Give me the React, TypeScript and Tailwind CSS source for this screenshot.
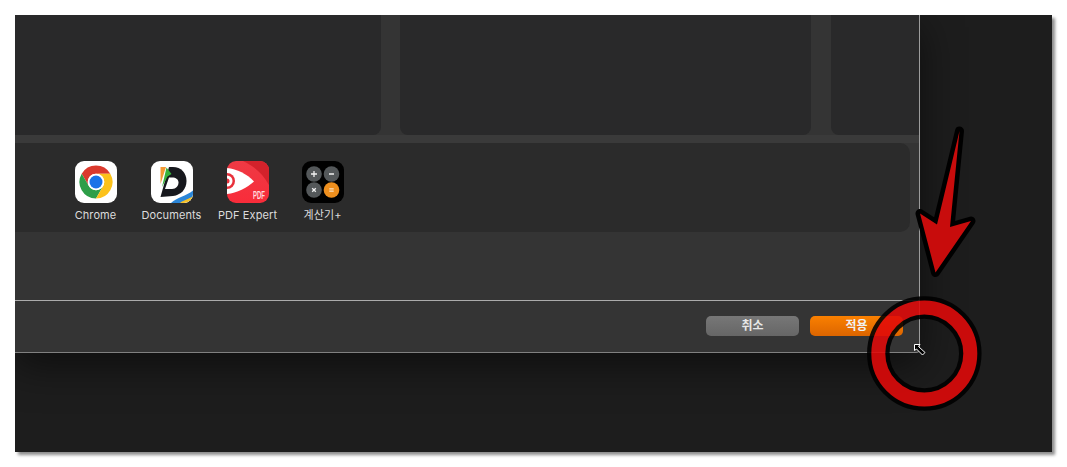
import React from "react";

const ChromeIcon = () => (
  <svg viewBox="0 0 42 42" className="w-[42px] h-[42px] rounded-[9px] bg-white">
    <path d="M6.7 12.75A16.5 16.5 0 0 1 35.3 12.75L21 12.75A8.25 8.25 0 0 0 13.85 25.1Z" fill="#db3a2e" />
    <path d="M6.7 12.75L13.85 25.1A8.25 8.25 0 0 0 28.15 25.1L21 37.5A16.5 16.5 0 0 1 6.7 12.75Z" fill="#2e9e48" />
    <path d="M28.15 25.1L21 37.5A16.5 16.5 0 0 0 35.3 12.75L21 12.75A8.25 8.25 0 0 1 28.15 25.1Z" fill="#fcc21b" />
    <circle cx="21" cy="21" r="8.25" fill="#fff" />
    <circle cx="21" cy="21" r="6.5" fill="#1a73e8" />
  </svg>
);

const DocumentsIcon = () => (
  <svg viewBox="0 0 42 42" className="w-[42px] h-[42px] rounded-[9px] bg-white">
    <path d="M18 6H22C30 6 35.5 12 35.5 20C35.5 28 30 34 22 35L9.500 36L12 27Z" fill="#17181d" />
    <path d="M18 16.500H21C25 16.500 27.500 18.500 27.500 21.500C27.500 25 25 28 21 28L14 28Z" fill="#fff" />
    <path d="M9.500 6H15L9.500 23Z" fill="#f39a34" />
    <path d="M15.500 6.500L20.500 13L16.500 15.500L11 26Z" fill="#37b23c" />
    <path d="M14 42C20 35 32 34 42 27.500V42Z" fill="#fff" />
    <path d="M20 42C26 36.500 35 35 42 29.500V36C37 39 33 40 30 42Z" fill="#2b86d8" />
    <path d="M29 42C33 38.500 38 38.500 42 35V42Z" fill="#f6c229" />
  </svg>
);

const PdfExpertIcon = () => (
  <svg viewBox="0 0 42 42" className="w-[42px] h-[42px] rounded-[9px]">
    <defs>
      <linearGradient id="pdfBg" x1="0" y1="0" x2="0" y2="1">
        <stop offset="0" stopColor="#ee3a44" />
        <stop offset="1" stopColor="#f92c3a" />
      </linearGradient>
    </defs>
    <rect width="42" height="42" fill="url(#pdfBg)" />
    <path d="M16 0H42V24C36 13 27 5 16 0Z" fill="#d3222b" />
    <path d="M0 7C10 8 20 13 27 20.500C20 27 10 32 0 33Z" fill="#fff" />
    <circle cx="0" cy="20" r="8" fill="#e8303a" />
    <circle cx="0" cy="20" r="5.500" fill="#fff" />
    <circle cx="0" cy="20" r="2.500" fill="#e8303a" />
    <text
      transform="translate(26 38) scale(0.6 1)"
      fontSize="10"
      fontWeight="700"
      fill="#ffd9dc"
      fontFamily="'Liberation Sans', sans-serif"
    >
      PDF
    </text>
  </svg>
);

const CalcIcon = () => (
  <svg viewBox="0 0 42 42" className="w-[42px] h-[42px] rounded-[9px] bg-black">
    <circle cx="12" cy="13" r="7.800" fill="#54585a" />
    <circle cx="29.500" cy="13" r="7.800" fill="#54585a" />
    <circle cx="12" cy="29" r="7.800" fill="#54585a" />
    <circle cx="29.500" cy="29" r="7.800" fill="#ee8f1e" />
    <g stroke="#f2f2f2" strokeWidth="1.300">
      <path d="M9 13H15M12 10V16" />
      <path d="M27 13H32" />
      <path d="M10.200 27.200L13.800 30.800M13.800 27.200L10.200 30.800" />
      <path d="M27.300 27.800H31.700M27.300 30.200H31.700" stroke="#fbe3c4" />
    </g>
  </svg>
);

const apps = [
  { name: "Chrome", icon: <ChromeIcon />, width: "w-[76px]" },
  { name: "Documents", icon: <DocumentsIcon />, width: "w-[76px]" },
  { name: "PDF Expert", icon: <PdfExpertIcon />, width: "w-[76px]" },
  { name: "계산기+", icon: <CalcIcon />, width: "w-[74px]" },
];

export default function App() {
  return (
    <div className="w-[1067px] h-[467px] bg-white pt-[15px] pl-[15px] overflow-hidden">
      <div className="relative w-[1037px] h-[437px] overflow-hidden bg-[#1d1d1d] shadow-[3px_3px_3px_rgba(0,0,0,0.45)]">
        {/* settings window */}
        <div className="w-[905px] h-[338px] flex flex-col bg-[#343434] border-r border-b border-r-[#9c9c9c] border-b-[#808080] rounded-br-[4px] shadow-[0_12px_40px_rgba(0,0,0,0.55)]">
          <div className="flex h-[120px] shrink-0">
            <div className="w-[366px] bg-[#29292a] rounded-br-[8px]" />
            <div className="w-[411px] ml-[19px] bg-[#29292a] rounded-b-[8px]" />
            <div className="flex-1 ml-[20px] bg-[#29292a] rounded-bl-[8px]" />
          </div>
          <div className="h-[8px] shrink-0 bg-[#3a3a3a]" />
          <div className="w-[895px] h-[89px] shrink-0 bg-[#2b2b2b] rounded-r-[10px] flex pl-[42.5px] pt-[18px]">
            {apps.map((app) => (
              <div key={app.name} className={`${app.width} flex flex-col items-center`}>
                {app.icon}
                <span className="mt-[5px] text-[11px] leading-[14px] tracking-[0.1px] whitespace-nowrap text-[#dcdcdc] font-['Inter','Noto_Sans_CJK_KR',sans-serif]">
                  {app.name}
                </span>
              </div>
            ))}
          </div>
          <div className="h-[68px] shrink-0" />
          <div className="flex-1 border-t border-[#ababab] flex justify-end gap-[11px] pt-[15px] pr-[16px] font-['Inter','Noto_Sans_CJK_KR',sans-serif]">
            <button className="w-[93px] h-[20px] rounded-[5px] bg-gradient-to-b from-[#777777] to-[#666666] text-[12px] leading-[20px] font-semibold text-[#e8e8e8]">
              취소
            </button>
            <button className="w-[93px] h-[20px] rounded-[5px] bg-gradient-to-b from-[#fa8000] to-[#dc6500] text-[12px] leading-[20px] font-semibold text-[#f0f0f0]">
              적용
            </button>
          </div>
        </div>

        {/* annotation drawn over the screenshot */}
        <svg viewBox="15 15 1037 437" className="absolute inset-0 w-[1037px] h-[437px]">
          <g opacity="0.88">
            <circle cx="924.300" cy="353.500" r="46" fill="none" stroke="#000" strokeWidth="22.500" />
            <circle cx="924.300" cy="353.500" r="46" fill="none" stroke="#e20909" strokeWidth="14" />
          </g>
          <path
            d="M959.500 131L937 224.500L920 213.500L935.500 272.500L971 221L950 227Z"
            fill="#c80c0c"
            stroke="#000"
            strokeWidth="9"
            strokeLinejoin="round"
            paintOrder="stroke"
          />
          <path
            d="M914.500 344.500H920L918.500 346.500L925 352.500L922.500 355L916.500 349L914.500 350.500Z"
            fill="#000"
            stroke="#fff"
            strokeWidth="1"
          />
        </svg>
      </div>
    </div>
  );
}
